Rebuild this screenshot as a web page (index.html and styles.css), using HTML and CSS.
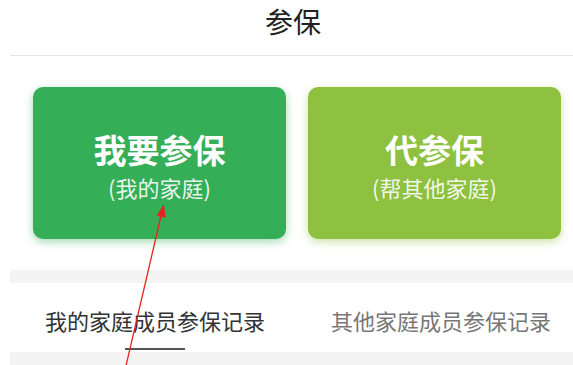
FILE: index.html
```html
<!DOCTYPE html>
<html lang="zh-CN">
<head>
    <meta charset="UTF-8">
    <meta name="viewport" content="width=device-width, initial-scale=1.0">
    <title>参保</title>
    <link rel="stylesheet" href="styles.css">
</head>
<body>

    <div class="page">
        <header class="top-bar">参保</header>

        <!-- Two entry cards -->
        <div class="entry-row">
            <div class="entry-card mine">
                <div class="entry-title">我要参保</div>
                <div class="entry-sub">(我的家庭)</div>
            </div>
            <div class="entry-card proxy">
                <div class="entry-title">代参保</div>
                <div class="entry-sub">(帮其他家庭)</div>
            </div>
        </div>

        <div class="spacer-band"></div>

        <!-- Record tabs -->
        <div class="tabs">
            <div class="tab active">我的家庭成员参保记录</div>
            <div class="tab">其他家庭成员参保记录</div>
        </div>

        <div class="list-area"></div>
    </div>

    <!-- Red annotation arrow drawn over the page -->
    <svg class="annotation" width="573" height="365" viewBox="0 0 573 365">
        <line x1="161" y1="216" x2="125" y2="370" stroke="#e5231f" stroke-width="1.3"/>
        <polygon points="164,204 156.7,215.7 165.5,217.7" fill="#e5231f"/>
    </svg>

</body>
</html>
```

FILE: styles.css
```css
body {
    margin: 0;
    padding: 0;
    background-color: #fff;
    font-family: "Noto Sans CJK SC", "Noto Sans", sans-serif;
    overflow: hidden;
    position: relative;
}

.page {
    margin-left: 10px;
    width: 566px;
}

.top-bar {
    height: 55px;
    line-height: 42px;
    text-align: center;
    font-size: 28px;
    color: #222;
    border-bottom: 1px solid #e6e6e6;
}

.entry-row {
    display: flex;
    gap: 22px;
    margin-top: 31px;
    padding-left: 23px;
}

.entry-card {
    width: 253px;
    height: 152px;
    box-sizing: border-box;
    padding-top: 4px;
    border-radius: 10px;
    display: flex;
    flex-direction: column;
    align-items: center;
    justify-content: center;
    color: #fff;
}

.entry-card.mine {
    background-color: #35ae58;
    box-shadow: 0 3px 8px rgba(53, 174, 88, 0.45);
}

.entry-card.proxy {
    background-color: #8dc13f;
    box-shadow: 0 3px 8px rgba(141, 193, 63, 0.45);
}

.entry-title {
    font-size: 33px;
    font-weight: bold;
    line-height: 40px;
}

.entry-sub {
    font-size: 22px;
    line-height: 28px;
    margin-top: 4px;
    color: rgba(255, 255, 255, 0.9);
}

.spacer-band {
    height: 13px;
    margin-top: 31px;
    background-color: #f4f4f4;
}

.tabs {
    display: flex;
    padding-left: 2px;
    margin-right: -8px;
}

.tab {
    flex: 1;
    text-align: center;
    font-size: 22px;
    line-height: 34px;
    padding-top: 20px;
    padding-bottom: 2px;
    color: #777;
}

.tab.active {
    color: #333;
}

/* short underline under the selected tab */
.tab.active::after {
    content: "";
    display: block;
    width: 60px;
    height: 2px;
    margin: 11px auto 0;
    background-color: #555;
}

.tab:not(.active)::after {
    content: "";
    display: block;
    height: 2px;
    margin-top: 11px;
}

.list-area {
    height: 13px;
    background-color: #f4f4f4;
}

.annotation {
    position: absolute;
    top: 0;
    left: 0;
    pointer-events: none;
}
```
